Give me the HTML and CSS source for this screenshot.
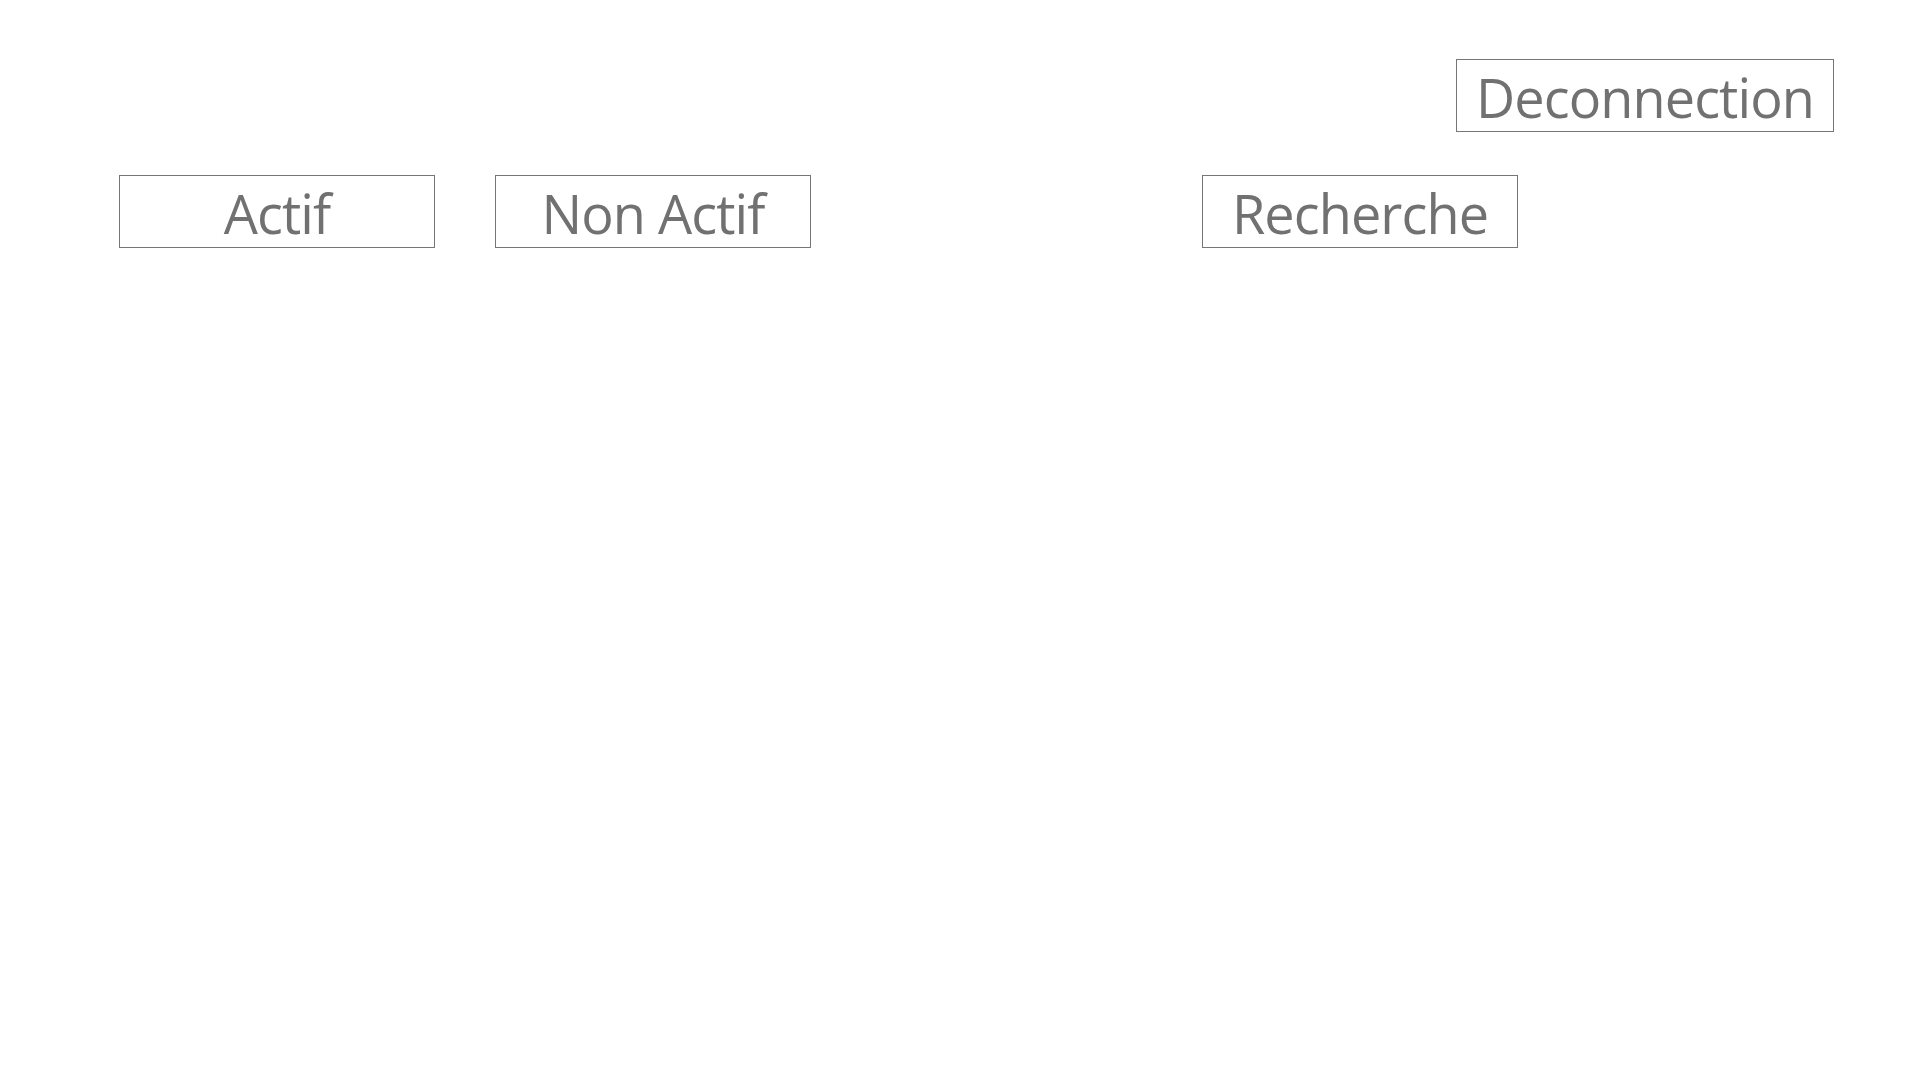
FILE: index.html
```html
<!DOCTYPE html>
<html lang="fr">
<head>
<meta charset="utf-8">
<title>Accueil</title>
<link rel="stylesheet" href="styles.css">
</head>
<body>
  <header class="top-bar">
    <button class="btn btn-logout">Deconnection</button>
  </header>
  <nav class="filter-bar">
    <button class="btn btn-filter">Actif</button>
    <button class="btn btn-filter">Non Actif</button>
    <button class="btn btn-filter btn-search">Recherche</button>
  </nav>
</body>
</html>
```
FILE: styles.css
```css
html, body {
  margin: 0;
  padding: 0;
  background: #ffffff;
}

body {
  width: 1920px;
  height: 1080px;
  font-family: "Open Sans", "Noto Sans", sans-serif;
}

.top-bar {
  display: flex;
  justify-content: flex-end;
  padding: 59px 86px 0 0;
}

.filter-bar {
  display: flex;
  padding: 43px 0 0 119px;
  gap: 60px;
}

.btn {
  box-sizing: border-box;
  height: 73px;
  margin: 0;
  padding: 3px 0 0 0;
  background: #ffffff;
  border: 1px solid #767676;
  border-radius: 0;
  color: #717171;
  font-family: "Open Sans", "Noto Sans", sans-serif;
  font-size: 54px;
  letter-spacing: -0.9px;
  line-height: 68px;
  text-align: center;
  display: flex;
  align-items: flex-start;
  justify-content: center;
  white-space: nowrap;
}

.btn-logout {
  width: 378px;
}

.btn-filter {
  width: 316px;
}

.btn-search {
  margin-left: 331px;
}
```
